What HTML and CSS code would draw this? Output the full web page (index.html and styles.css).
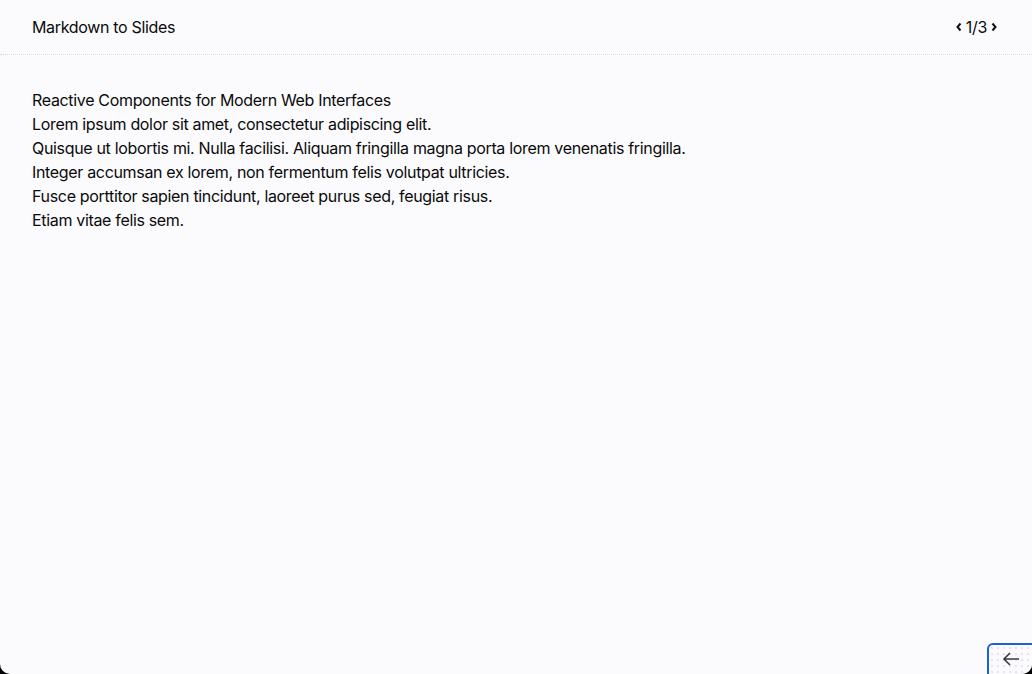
FILE: index.html
```html
<!DOCTYPE html>
<html lang="en">
<head>
<meta charset="utf-8">
<title>Markdown to Slides</title>
<link rel="stylesheet" href="styles.css">
</head>
<body>
<div class="app">
  <header class="topbar">
    <div class="title">Markdown to Slides</div>
    <nav class="pager">
      <svg class="chev" width="8" height="10" viewBox="0 0 8 10"><path d="M5.5 1.5 L2.5 5 L5.5 8.5" fill="none" stroke="#111" stroke-width="2"/></svg>
      <span class="count">1/3</span>
      <svg class="chev" width="8" height="10" viewBox="0 0 8 10"><path d="M2.5 1.5 L5.5 5 L2.5 8.5" fill="none" stroke="#111" stroke-width="2"/></svg>
    </nav>
  </header>
  <main class="slide">
    <p>Reactive Components for Modern Web Interfaces</p>
    <p>Lorem ipsum dolor sit amet, consectetur adipiscing elit.</p>
    <p>Quisque ut lobortis mi. Nulla facilisi. Aliquam fringilla magna porta lorem venenatis fringilla.</p>
    <p>Integer accumsan ex lorem, non fermentum felis volutpat ultricies.</p>
    <p>Fusce porttitor sapien tincidunt, laoreet purus sed, feugiat risus.</p>
    <p>Etiam vitae felis sem.</p>
  </main>
  <button class="back" aria-label="Back">
    <svg width="20" height="16" viewBox="0 0 20 16"><path d="M18 8 H3 M9 2 L3 8 L9 14" fill="none" stroke="#3a3a3a" stroke-width="1.6"/></svg>
  </button>
</div>
</body>
</html>
```

FILE: styles.css
```css
html, body {
  margin: 0;
  padding: 0;
  height: 100%;
  background: #000;
  overflow: hidden;
}
.app {
  position: relative;
  height: 674px;
  background: #fbfbfe;
  border-radius: 0 0 10px 10px;
  overflow: hidden;
  font-family: Inter, "Liberation Sans", sans-serif;
  font-size: 16px;
  line-height: 24px;
  letter-spacing: -0.33px;
  color: #0a0a0a;
}
.topbar {
  display: flex;
  align-items: center;
  justify-content: space-between;
  padding: 15px 34px 15px 32px;
  border-bottom: 1px dotted #d6d6ea;
}
.pager {
  display: flex;
  align-items: center;
  gap: 3px;
}
.chev { display: block; }
.slide {
  padding: 33px 32px;
}
.slide p {
  margin: 0;
}
.back {
  position: absolute;
  left: 987px;
  top: 643px;
  width: 50px;
  height: 40px;
  padding: 0 0 8px 12px;
  border: 2px solid #1d5fd6;
  border-radius: 6px;
  background-color: #fbfbfe;
  background-image: radial-gradient(#e6e2f4 0.7px, transparent 1px);
  background-size: 6px 6px;
  display: flex;
  align-items: center;
  justify-content: flex-start;
}
.back svg { display: block; }
```
